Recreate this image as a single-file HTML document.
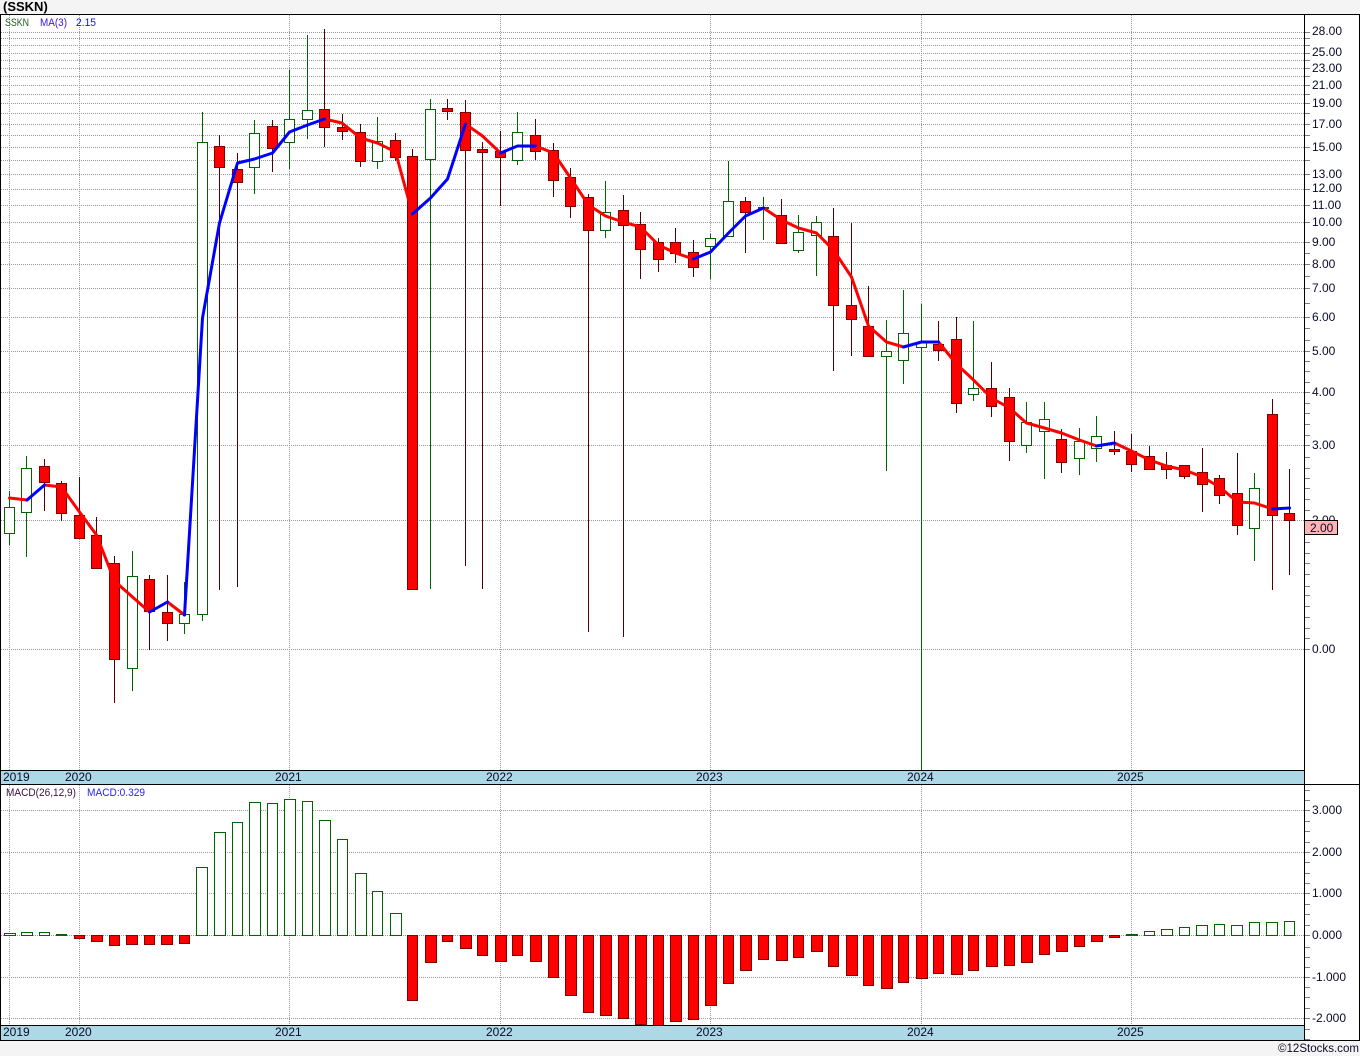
<!DOCTYPE html>
<html><head><meta charset="utf-8"><title>SSKN</title>
<style>html,body{margin:0;padding:0;background:#f4f4f4}svg{display:block}text{font-family:"Liberation Sans",sans-serif;font-size:12px;fill:#0a0a28}</style>
</head><body>
<svg width="1360" height="1056" viewBox="0 0 1360 1056" xmlns="http://www.w3.org/2000/svg">
<rect width="1360" height="1056" fill="#f4f4f4"/>
<rect x="0" y="14" width="1360" height="1026" fill="#fff"/>
<g shape-rendering="crispEdges" fill="none">
<path stroke="#999" stroke-dasharray="1 1" d="M1 32.5H1304M1 38.5H1304M1 45.5H1304M1 53.5H1304M1 60.5H1304M1 68.5H1304M1 76.5H1304M1 85.5H1304M1 94.5H1304M1 103.5H1304M1 113.5H1304M1 124.5H1304M1 135.5H1304M1 147.5H1304M1 160.5H1304M1 174.5H1304M1 189.5H1304M1 205.5H1304M1 222.5H1304M1 242.5H1304M1 264.5H1304M1 288.5H1304M1 317.5H1304M1 351.5H1304M1 392.5H1304M1 445.5H1304M1 520.5H1304M1 649.5H1304M1 810.5H1304M1 852.5H1304M1 893.5H1304M1 935.5H1304M1 977.5H1304M1 1018.5H1304M9.5 15V770M79.5 15V770M289.5 15V770M500.5 15V770M710.5 15V770M921.5 15V770M1131.5 15V770M9.5 785V1025M79.5 785V1025M289.5 785V1025M500.5 785V1025M710.5 785V1025M921.5 785V1025M1131.5 785V1025"/>
<path stroke="#808080" d="M1305 32.5h5M1305 38.5h5M1305 45.5h5M1305 53.5h5M1305 60.5h5M1305 68.5h5M1305 76.5h5M1305 85.5h5M1305 94.5h5M1305 103.5h5M1305 113.5h5M1305 124.5h5M1305 135.5h5M1305 147.5h5M1305 160.5h5M1305 174.5h5M1305 189.5h5M1305 205.5h5M1305 222.5h5M1305 242.5h5M1305 253.5h5M1305 264.5h5M1305 276.5h5M1305 288.5h5M1305 303.5h5M1305 317.5h5M1305 328.5h5M1305 340.5h5M1305 351.5h5M1305 361.5h5M1305 371.5h5M1305 382.5h5M1305 392.5h5M1305 403.5h5M1305 413.5h5M1305 424.5h5M1305 435.5h5M1305 445.5h5M1305 457.5h5M1305 468.5h5M1305 478.5h5M1305 488.5h5M1305 499.5h5M1305 510.5h5M1305 520.5h5M1305 542.5h5M1305 553.5h5M1305 563.5h5M1305 574.5h5M1305 586.5h5M1305 595.5h5M1305 606.5h5M1305 617.5h5M1305 628.5h5M1305 638.5h5M1305 649.5h5M1305 790.5h5M1305 800.5h5M1305 810.5h5M1305 821.5h5M1305 831.5h5M1305 842.5h5M1305 852.5h5M1305 862.5h5M1305 873.5h5M1305 883.5h5M1305 893.5h5M1305 904.5h5M1305 914.5h5M1305 925.5h5M1305 935.5h5M1305 947.5h5M1305 957.5h5M1305 967.5h5M1305 977.5h5M1305 987.5h5M1305 997.5h5M1305 1008.5h5M1305 1018.5h5M1305 1029.5h5M1305 1039.5h5"/>
<path stroke="#006400" d="M9.5 491V545M26.5 456V557M132.5 551V691M184.5 582V634M202.5 112V621M254.5 120V194M289.5 70V169M307.5 35V139M377.5 117V169M430.5 99V589M517.5 112V165M605.5 181V238M710.5 234V279M728.5 161V237M763.5 197V240M798.5 215V253M816.5 216V276M886.5 320V471M903.5 290V384M921.5 304V770M973.5 321V401M1026.5 402V453M1044.5 402V479M1079.5 428V475M1096.5 416V462M1254.5 473V561"/>
<path stroke="#500000" d="M44.5 459V511M61.5 481V521M79.5 477V538M96.5 517V568M114.5 556V703M149.5 575V650M167.5 575V641M219.5 135V590M237.5 153V587M272.5 120V172M324.5 29V147M342.5 114V140M360.5 124V167M395.5 133V161M412.5 149V589M447.5 99V120M465.5 100V566M482.5 142V589M500.5 131V206M535.5 119V160M553.5 143V197M570.5 168V218M588.5 194V632M623.5 195V637M640.5 212V279M658.5 238V272M675.5 228V263M693.5 240V277M745.5 197V253M781.5 199V243M833.5 208V371M851.5 223V356M868.5 286V356M938.5 321V361M956.5 317V413M991.5 362V417M1009.5 388V461M1061.5 429V473M1114.5 431V455M1131.5 434V472M1149.5 446V470M1166.5 452V479M1184.5 465V479M1202.5 448V512M1219.5 475V504M1237.5 453V535M1272.5 399V590M1289.5 469V575"/>
<path stroke="#006400" fill="#fff" d="M4.5 507.5h10v26h-10zM21.5 468.5h10v44h-10zM127.5 576.5h10v92h-10zM179.5 614.5h10v9h-10zM197.5 142.5h10v472h-10zM249.5 133.5h10v34h-10zM284.5 119.5h10v23h-10zM302.5 110.5h10v9h-10zM372.5 141.5h10v20h-10zM425.5 109.5h10v50h-10zM512.5 132.5h10v28h-10zM600.5 212.5h10v18h-10zM705.5 238.5h10v8h-10zM723.5 201.5h10v35h-10zM758.5 207.5h10v1h-10zM793.5 232.5h10v18h-10zM811.5 222.5h10v13h-10zM881.5 351.5h10v5h-10zM898.5 333.5h10v27h-10zM916.5 342.5h10v5h-10zM968.5 388.5h10v6h-10zM1021.5 422.5h10v23h-10zM1039.5 419.5h10v12h-10zM1074.5 441.5h10v17h-10zM1091.5 436.5h10v12h-10zM1249.5 488.5h10v40h-10z"/>
<path stroke="#800000" fill="#f00" d="M39.5 466.5h10v16h-10zM56.5 483.5h10v30h-10zM74.5 515.5h10v23h-10zM91.5 535.5h10v33h-10zM109.5 563.5h10v96h-10zM144.5 579.5h10v32h-10zM162.5 612.5h10v11h-10zM214.5 146.5h10v21h-10zM232.5 169.5h10v13h-10zM267.5 126.5h10v22h-10zM319.5 109.5h10v18h-10zM337.5 127.5h10v4h-10zM355.5 132.5h10v29h-10zM390.5 140.5h10v17h-10zM407.5 156.5h10v433h-10zM442.5 108.5h10v3h-10zM460.5 112.5h10v38h-10zM477.5 149.5h10v3h-10zM495.5 151.5h10v6h-10zM530.5 135.5h10v16h-10zM548.5 150.5h10v30h-10zM565.5 177.5h10v29h-10zM583.5 197.5h10v33h-10zM618.5 210.5h10v15h-10zM635.5 224.5h10v25h-10zM653.5 242.5h10v17h-10zM670.5 242.5h10v11h-10zM688.5 252.5h10v15h-10zM740.5 201.5h10v11h-10zM776.5 215.5h10v28h-10zM828.5 236.5h10v69h-10zM846.5 305.5h10v14h-10zM863.5 326.5h10v30h-10zM933.5 344.5h10v6h-10zM951.5 339.5h10v64h-10zM986.5 388.5h10v18h-10zM1004.5 397.5h10v44h-10zM1056.5 439.5h10v23h-10zM1109.5 449.5h10v2h-10zM1126.5 451.5h10v13h-10zM1144.5 456.5h10v13h-10zM1161.5 465.5h10v4h-10zM1179.5 465.5h10v11h-10zM1197.5 472.5h10v12h-10zM1214.5 478.5h10v17h-10zM1232.5 493.5h10v32h-10zM1267.5 414.5h10v101h-10zM1284.5 513.5h10v7h-10z"/>
<path stroke="#006400" fill="#fff" d="M4.5 933.5h11v2h-11zM21.5 932.5h11v3h-11zM39.5 932.5h10v3h-10zM56.5 934.5h10v1h-10zM196.5 867.5h11v68h-11zM214.5 832.5h11v103h-11zM232.5 822.5h10v113h-10zM249.5 802.5h11v133h-11zM267.5 803.5h10v132h-10zM284.5 799.5h11v136h-11zM302.5 801.5h10v134h-10zM319.5 820.5h11v115h-11zM337.5 839.5h10v96h-10zM355.5 873.5h11v62h-11zM372.5 891.5h10v44h-10zM390.5 913.5h11v22h-11zM1126.5 934.5h11v1h-11zM1144.5 931.5h10v4h-10zM1161.5 929.5h11v6h-11zM1179.5 927.5h10v8h-10zM1196.5 925.5h11v10h-11zM1214.5 924.5h10v11h-10zM1231.5 925.5h11v10h-11zM1249.5 922.5h10v13h-10zM1266.5 922.5h11v13h-11zM1284.5 921.5h10v14h-10z"/>
<path stroke="#800000" fill="#f00" d="M74.5 935.5h10v3h-10zM91.5 935.5h11v6h-11zM109.5 935.5h10v10h-10zM126.5 935.5h11v9h-11zM144.5 935.5h10v9h-10zM161.5 935.5h11v9h-11zM179.5 935.5h10v8h-10zM407.5 935.5h10v65h-10zM425.5 935.5h11v27h-11zM442.5 935.5h10v6h-10zM460.5 935.5h11v13h-11zM477.5 935.5h10v20h-10zM495.5 935.5h11v26h-11zM512.5 935.5h10v20h-10zM530.5 935.5h11v26h-11zM548.5 935.5h10v42h-10zM565.5 935.5h11v60h-11zM583.5 935.5h10v77h-10zM600.5 935.5h11v80h-11zM618.5 935.5h10v83h-10zM635.5 935.5h11v89h-11zM653.5 935.5h10v90h-10zM670.5 935.5h11v86h-11zM688.5 935.5h10v84h-10zM705.5 935.5h11v70h-11zM723.5 935.5h10v48h-10zM740.5 935.5h11v35h-11zM758.5 935.5h10v24h-10zM776.5 935.5h11v25h-11zM793.5 935.5h10v22h-10zM811.5 935.5h11v16h-11zM828.5 935.5h10v31h-10zM846.5 935.5h11v40h-11zM863.5 935.5h10v50h-10zM881.5 935.5h11v53h-11zM898.5 935.5h10v47h-10zM916.5 935.5h11v43h-11zM933.5 935.5h10v38h-10zM951.5 935.5h11v39h-11zM968.5 935.5h10v35h-10zM986.5 935.5h11v31h-11zM1004.5 935.5h10v30h-10zM1021.5 935.5h11v27h-11zM1039.5 935.5h10v19h-10zM1056.5 935.5h11v16h-11zM1074.5 935.5h10v11h-10zM1091.5 935.5h11v6h-11zM1109.5 935.5h10v2h-10z"/>
</g>
<g fill="none" stroke-width="3" stroke-linejoin="round" stroke-linecap="round">
<g stroke="#f00">
<polyline points="9.5,498 27,500"/>
<polyline points="44.5,485 61.5,487 79.5,512 96.5,535 114.5,581 132.5,597 149.5,612"/>
<polyline points="167.5,602 184.5,615"/>
<polyline points="324.5,119 342,123 360.5,138 377.5,143 395.5,152 412.5,214"/>
<polyline points="465.5,124 482.5,136 500.5,153"/>
<polyline points="535.5,146 553.5,153 570.5,178 588.5,205 605.5,216 623,222 640.5,227 658.5,245 675.5,253 693.5,259"/>
<polyline points="763.5,208 781.5,220 798.5,228 816.5,233 833.5,250 851.5,277 868.5,326 886.5,342 903.5,347"/>
<polyline points="938.5,342 956.5,364 973.5,380 991.5,398 1009.5,408 1026.5,423 1044.5,428 1061.5,433 1079.5,440 1096.5,446"/>
<polyline points="1114.5,443 1131.5,451 1149.5,460 1166.5,466 1184.5,470 1202.5,477 1219.5,487 1237.5,502 1254.5,503 1272.5,509"/>
</g>
<g stroke="#00f">
<polyline points="27,500 44.5,485"/>
<polyline points="149.5,612 167.5,602"/>
<polyline points="184.5,615 202.5,318 219.5,223 237.5,163 254.5,159 272.5,153 289.5,132 307.5,125 324.5,119"/>
<polyline points="412.5,214 430.5,198 447.5,179 465.5,124"/>
<polyline points="500.5,153 517.5,146 535.5,146"/>
<polyline points="693.5,259 710.5,252 728.5,233 745.5,216 763.5,208"/>
<polyline points="903.5,347 921.5,342 938.5,342"/>
<polyline points="1096.5,446 1114.5,443"/>
<polyline points="1272.5,509 1289.5,508"/>
</g>
</g>
<g shape-rendering="crispEdges">
<rect x="1" y="770" width="1303" height="14" fill="#add8e6"/>
<rect x="1" y="1025" width="1303" height="15" fill="#add8e6"/>
<path stroke="#000" fill="none" d="M0 14.5H1360M0 770.5H1304M0 784.5H1360M0 1025.5H1304M0 1040.5H1360M0.5 14V1041M1304.5 14V1041M1359.5 14V1041"/>
</g>
<text x="3" y="11" style="font-weight:bold;font-size:13px;fill:#000">(SSKN)</text>
<text x="5" y="26" textLength="24" lengthAdjust="spacingAndGlyphs" style="font-size:11px;fill:#1c5c1c">SSKN</text>
<text x="40" y="26" textLength="27" lengthAdjust="spacingAndGlyphs" style="font-size:11px;fill:#3a12d8">MA(3)</text>
<text x="76" y="26" textLength="20" lengthAdjust="spacingAndGlyphs" style="font-size:11px;fill:#1010e0">2.15</text>
<text x="6" y="796" textLength="70" lengthAdjust="spacingAndGlyphs" style="font-size:11px;fill:#3a1040">MACD(26,12,9)</text>
<text x="87" y="796" textLength="58" lengthAdjust="spacingAndGlyphs" style="font-size:11px;fill:#2a22e8">MACD:0.329</text>
<text x="1312" y="35">28.00</text>
<text x="1312" y="56">25.00</text>
<text x="1312" y="72">23.00</text>
<text x="1312" y="89">21.00</text>
<text x="1312" y="107">19.00</text>
<text x="1312" y="128">17.00</text>
<text x="1312" y="151">15.00</text>
<text x="1312" y="178">13.00</text>
<text x="1312" y="192">12.00</text>
<text x="1312" y="209">11.00</text>
<text x="1312" y="226">10.00</text>
<text x="1312" y="246">9.00</text>
<text x="1312" y="268">8.00</text>
<text x="1312" y="292">7.00</text>
<text x="1312" y="321">6.00</text>
<text x="1312" y="355">5.00</text>
<text x="1312" y="396">4.00</text>
<text x="1312" y="449">3.00</text>
<text x="1312" y="524">2.00</text>
<text x="1312" y="653">0.00</text>
<rect x="1304.5" y="520.5" width="33" height="14" fill="#ffb4b4" stroke="#000" shape-rendering="crispEdges"/>
<text x="1310" y="532">2.00</text>
<text x="1312" y="814">3.000</text>
<text x="1312" y="856">2.000</text>
<text x="1312" y="897">1.000</text>
<text x="1312" y="939">0.000</text>
<text x="1312" y="981">-1.000</text>
<text x="1312" y="1022">-2.000</text>
<text x="3" y="781">2019</text><text x="65" y="781">2020</text><text x="275" y="781">2021</text><text x="486" y="781">2022</text><text x="696" y="781">2023</text><text x="907" y="781">2024</text><text x="1117" y="781">2025</text>
<text x="3" y="1036">2019</text><text x="65" y="1036">2020</text><text x="275" y="1036">2021</text><text x="486" y="1036">2022</text><text x="696" y="1036">2023</text><text x="907" y="1036">2024</text><text x="1117" y="1036">2025</text>
<text x="1278" y="1052" textLength="81" lengthAdjust="spacingAndGlyphs">©12Stocks.com</text>
</svg>
</body></html>
